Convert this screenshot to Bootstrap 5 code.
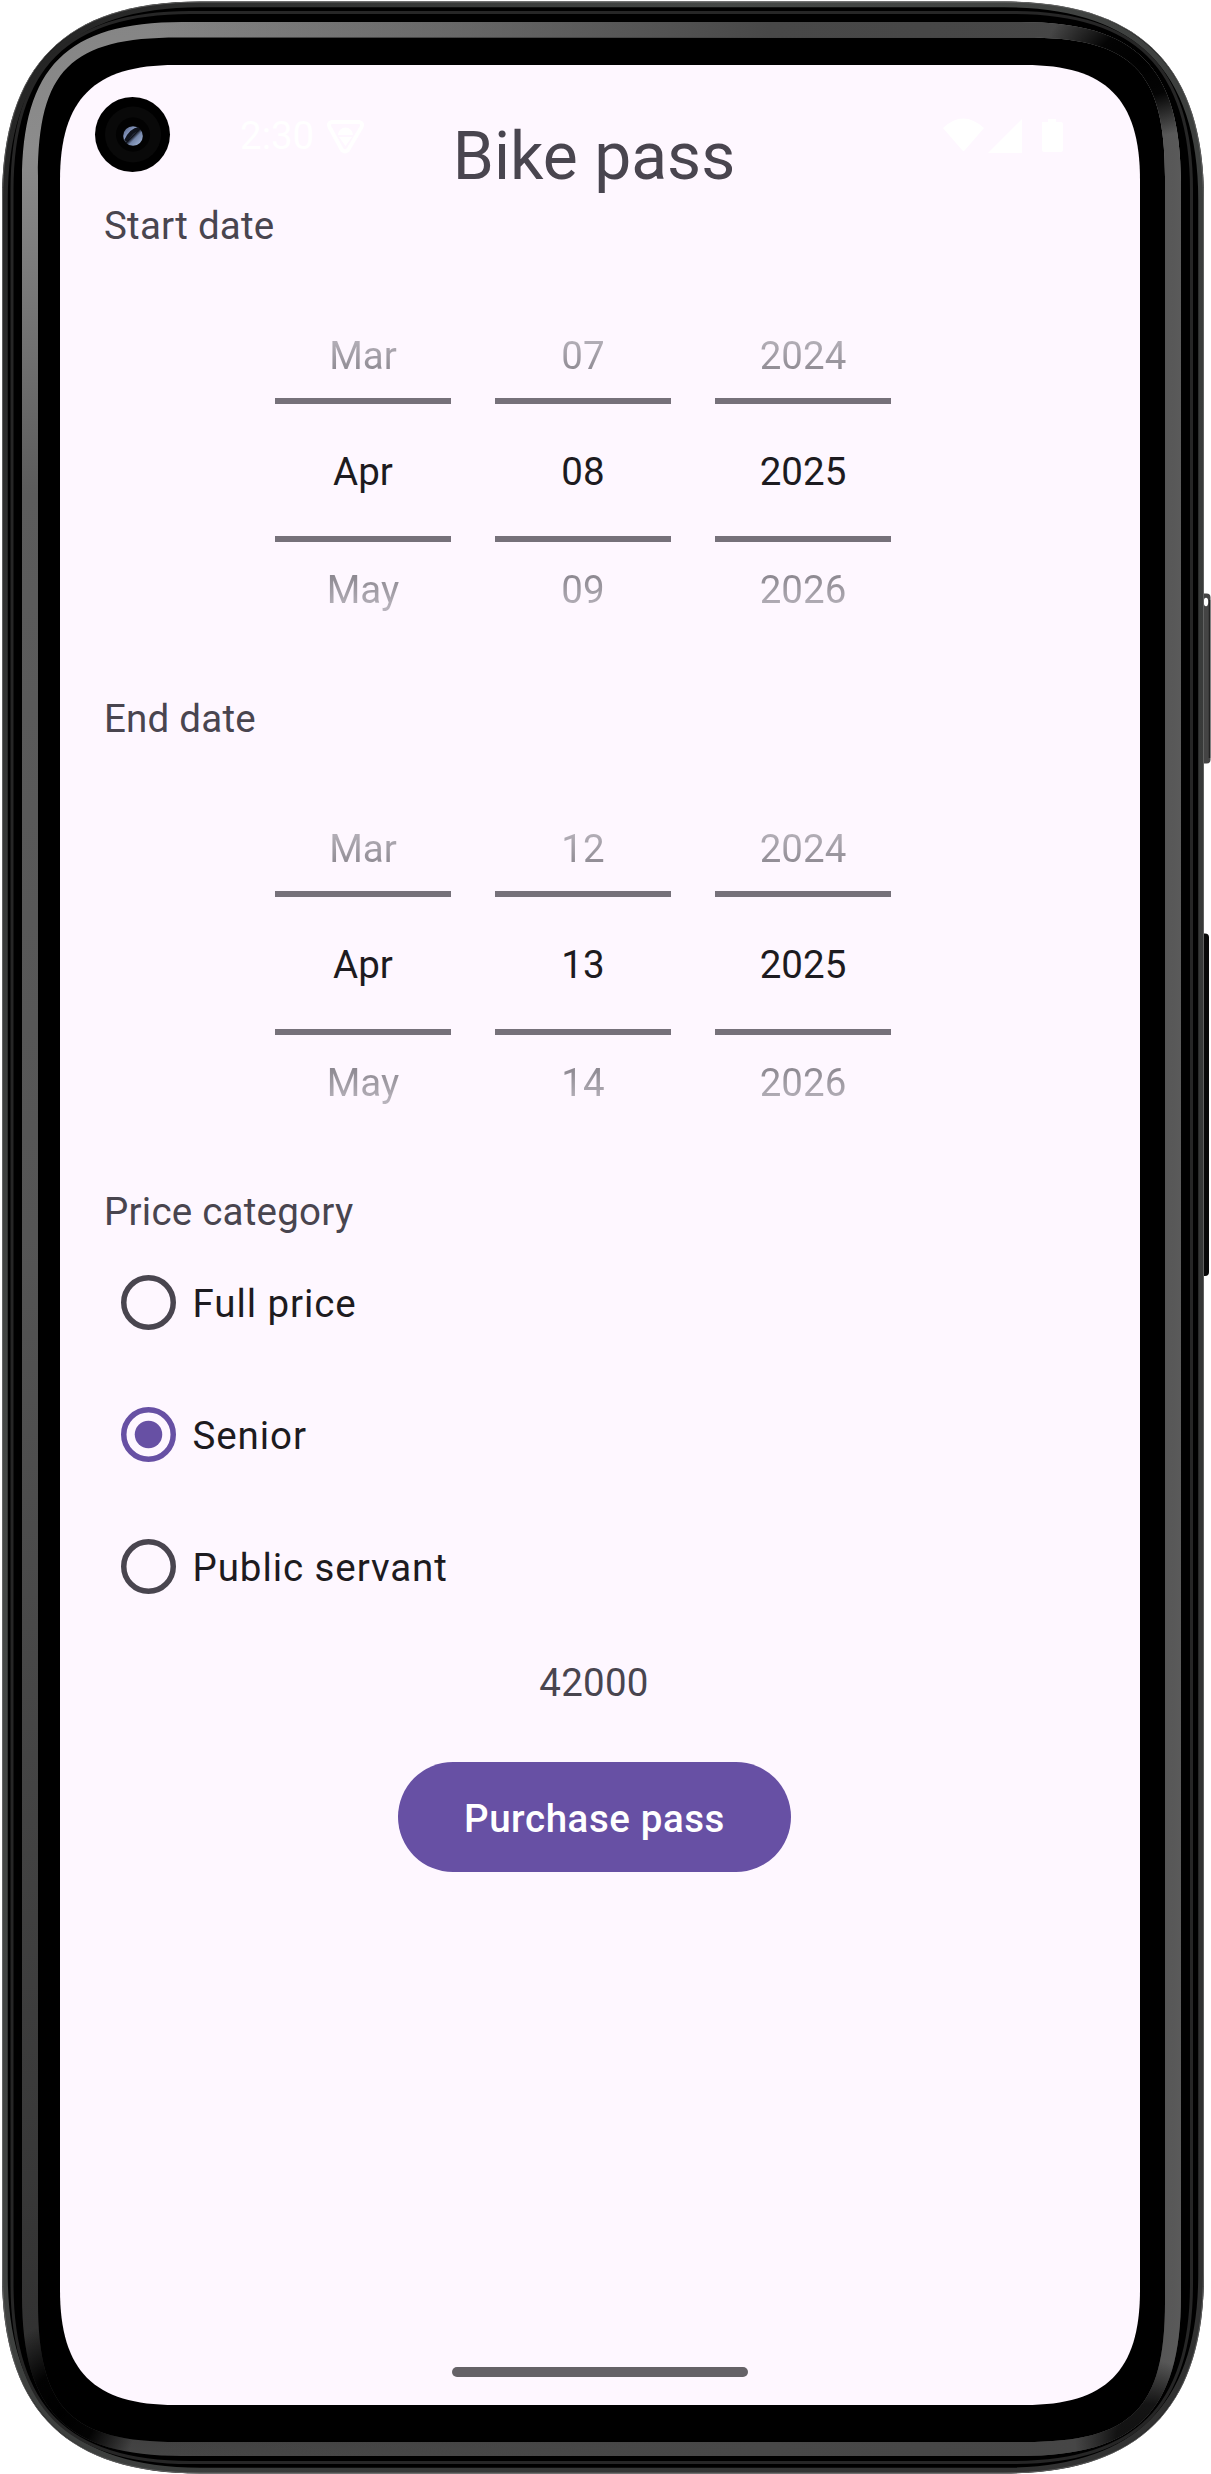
<!DOCTYPE html>
<html lang="en">
<head>
<meta charset="utf-8">
<meta name="viewport" content="width=device-width, initial-scale=1">
<title>Bike pass</title>
<link href="https://cdn.jsdelivr.net/npm/bootstrap@5.3.0/dist/css/bootstrap.min.css" rel="stylesheet">
<style>
  body { background:#fff; font-family:Roboto,"Liberation Sans",sans-serif; font-size:38.5px; line-height:52px; color:#1d1b20; }
  .device { width:1211px; height:2474px; padding:65px 71px 69px 60px; overflow:hidden; }
  .device-art { left:0; top:0; width:1211px; height:2474px; }
  .app-screen { width:1080px; height:2340px; padding:0 56px 0 44px; }
  .status-row { left:0; top:0; width:1080px; height:132px; color:#fff; }
  .status-time { left:180px; top:45px; }
  .status-vpn { left:266px; top:54px; }
  .status-icons { left:882px; top:50px; }
  .title-text { font-size:66px; line-height:78px; padding-top:53px; color:#49454f; font-weight:400; margin:0; }
  .muted-text { color:#49454f; letter-spacing:.006em; }
  .field-label { height:52px; margin-top:4px; }
  .picker-row { height:441px; gap:44px; padding-left:171px; margin-bottom:-4px; }
  .wheel { width:176px; text-align:center; padding-top:42.5px; }
  .wheel-item { height:117px; line-height:121px; }
  .wheel-sel { height:144px; margin:-13.5px 0; border:solid #76717a; border-width:6px 0; line-height:136px; }
  .fade-up, .fade-down { color:transparent; -webkit-background-clip:text; background-clip:text; }
  .fade-up { background-image:linear-gradient(#d5d0d9 15%,#77737b 82%); }
  .fade-down { background-image:linear-gradient(#77737b 25%,#d5d0d9 88%); }
  .choice { height:132px; letter-spacing:.024em; padding-left:16.5px; gap:17px; }
  .choice svg { margin-bottom:4px; }
  .price-text { margin-top:23px; }
  .btn-pass { --bs-btn-bg:#6750a4; --bs-btn-color:#fff; --bs-btn-border-width:0; --bs-btn-font-size:38.5px; --bs-btn-font-weight:500; --bs-btn-line-height:52px; width:393px; height:110px; padding:3px 0 0; margin:53px 0 0 1px; letter-spacing:.015em; }
  .home-bar { left:392px; bottom:28px; width:296px; height:10px; background:#656267; }
</style>
</head>
<body>
<div class="device position-relative">
  <svg class="device-art position-absolute" viewBox="0 0 1211 2474">
    <defs>
      <linearGradient id="edge" x1="0" y1="0" x2="1" y2="1"><stop offset="0" stop-color="#222"/><stop offset=".3" stop-color="#454846"/><stop offset=".6" stop-color="#3a3c3b"/><stop offset="1" stop-color="#303030"/></linearGradient>
      <linearGradient id="band" gradientUnits="userSpaceOnUse" x1="0" y1="0" x2="0" y2="2474"><stop offset="0" stop-color="#848484"/><stop offset=".06" stop-color="#8c8c8c"/><stop offset=".2" stop-color="#5c5c5c"/><stop offset=".5" stop-color="#555"/><stop offset=".88" stop-color="#383838"/><stop offset=".96" stop-color="#303030"/><stop offset="1" stop-color="#4a4a4a"/></linearGradient>
      <linearGradient id="bandR" gradientUnits="userSpaceOnUse" x1="150" y1="0" x2="1181" y2="0"><stop offset="0" stop-color="#4a4a4a" stop-opacity="0"/><stop offset=".6" stop-color="#484848"/><stop offset=".9" stop-color="#464646"/><stop offset="1" stop-color="#5a5a5a"/></linearGradient>
      <radialGradient id="shade"><stop offset="0" stop-color="#000"/><stop offset=".45" stop-color="#000" stop-opacity=".95"/><stop offset="1" stop-color="#000" stop-opacity="0"/></radialGradient>
      <linearGradient id="lens" x1="0" y1="0" x2="1" y2="1"><stop offset="0" stop-color="#4b5878"/><stop offset=".35" stop-color="#8a9cc4"/><stop offset=".5" stop-color="#10131c"/><stop offset=".62" stop-color="#7485a8"/><stop offset="1" stop-color="#a9bde0"/></linearGradient>
      <clipPath id="ring"><path clip-rule="evenodd" d="M22,182C22,67 67,22 182,22H1021C1136,22 1181,67 1181,182V2296C1181,2411 1136,2456 1021,2456H182C67,2456 22,2411 22,2296ZM38,177C38,70 71,37.500 178,37.500H1025C1132,37.500 1165,70 1165,177V2302C1165,2409 1132,2442 1025,2442H178C71,2442 38,2409 38,2302Z"/></clipPath>
    </defs>
    <rect x="1200" y="593.500" width="10.500" height="170" rx="4" fill="#444"/>
    <path d="M1209.500,600V758" stroke="#222" stroke-width="1.500"/>
    <ellipse cx="1206" cy="602" rx="2.200" ry="4.200" fill="#fff"/>
    <rect x="1200" y="933.500" width="9" height="342.500" rx="4" fill="#080808"/>
    <path fill="#000" d="M2,200C2,65 65,1.500 200,1.500H1004C1139,1.500 1204,65 1204,200V2274C1204,2409 1139,2473.500 1004,2473.500H200C65,2473.500 2,2409 2,2274Z"/>
    <path fill="none" stroke="url(#edge)" stroke-width="5.500" d="M5,200C5,68 68,4.500 200,4.500H1004C1136,4.500 1201,68 1201,200V2274C1201,2406 1136,2470.500 1004,2470.500H200C68,2470.500 5,2406 5,2274Z"/>
    <path fill="none" stroke="#777" stroke-opacity=".7" d="M2.500,200C2.500,65 65,2 200,2H1004C1139,2 1203.500,65 1203.500,200V2274C1203.500,2409 1139,2473 1004,2473H200C65,2473 2.500,2409 2.500,2274Z"/>
    <path fill="none" stroke="#262626" stroke-width="3" d="M12,190C12,67 67,12.500 190,12.500H1013C1136,12.500 1191.500,67 1191.500,190V2284C1191.500,2407 1136,2462.500 1013,2462.500H190C67,2462.500 12,2407 12,2284Z"/>
    <g clip-path="url(#ring)">
      <rect x="20" y="20" width="1165" height="2440" fill="url(#band)"/>
      <rect x="150" y="20" width="1035" height="2440" fill="url(#bandR)"/>
      <ellipse cx="1143" cy="62" rx="100" ry="75" fill="url(#shade)"/>
      <ellipse cx="62" cy="2412" rx="75" ry="90" fill="url(#shade)"/>
      <ellipse cx="1150" cy="2440" rx="75" ry="80" fill="url(#shade)" opacity=".8"/>
    </g>
    <path fill="#fef7ff" d="M60,180C60,99 94,65 175,65H1025C1106,65 1140,99 1140,180V2290C1140,2371 1106,2405 1025,2405H175C94,2405 60,2371 60,2290Z"/>
    <circle cx="132.500" cy="134.500" r="37.500" fill="#000"/>
    <circle cx="133" cy="134.500" r="28" fill="#090909"/>
    <circle cx="133" cy="134.500" r="17" fill="#020202"/>
    <circle cx="133" cy="136" r="9.800" fill="url(#lens)"/>
    <path d="M126,141Q131,130 139,129" fill="none" stroke="#10131c" stroke-width="4"/>
  </svg>

  <main class="app-screen position-relative d-flex flex-column">
    <div class="status-row position-absolute">
      <span class="status-time position-absolute">2:30</span>
      <svg class="status-vpn position-absolute" width="40" height="36" viewBox="0 0 40 36">
        <path d="M6,3H33Q38,4 35,9L22,31Q19,34 16,31L4,9Q1,4 6,3Z" fill="none" stroke="#fff" stroke-width="4" stroke-linejoin="round"/>
        <path d="M12,16A7,7 0 0 1 27,16ZM13,18H26L19.500,27Z" fill="#fff"/>
      </svg>
      <svg class="status-icons position-absolute" width="124" height="40" viewBox="0 0 124 40">
        <path fill="#fff" d="M1,13Q21,-6 42,13L23,35Q21.500,37 20,35ZM80,4V38H46ZM100,7H106V4H114V7H119Q121,7 121,9V35Q121,37 119,37H102Q100,37 100,35Z"/>
      </svg>
    </div>

    <h1 class="title-text text-center">Bike pass</h1>

    <section>
      <div class="muted-text field-label">Start date</div>
      <div class="picker-row d-flex">
        <div class="wheel"><div class="wheel-item fade-up">Mar</div><div class="wheel-sel">Apr</div><div class="wheel-item fade-down">May</div></div>
        <div class="wheel"><div class="wheel-item fade-up">07</div><div class="wheel-sel">08</div><div class="wheel-item fade-down">09</div></div>
        <div class="wheel"><div class="wheel-item fade-up">2024</div><div class="wheel-sel">2025</div><div class="wheel-item fade-down">2026</div></div>
      </div>
    </section>

    <section>
      <div class="muted-text field-label">End date</div>
      <div class="picker-row d-flex">
        <div class="wheel"><div class="wheel-item fade-up">Mar</div><div class="wheel-sel">Apr</div><div class="wheel-item fade-down">May</div></div>
        <div class="wheel"><div class="wheel-item fade-up">12</div><div class="wheel-sel">13</div><div class="wheel-item fade-down">14</div></div>
        <div class="wheel"><div class="wheel-item fade-up">2024</div><div class="wheel-sel">2025</div><div class="wheel-item fade-down">2026</div></div>
      </div>
    </section>

    <section>
      <div class="muted-text field-label">Price category</div>
      <div class="choice d-flex align-items-center">
        <svg width="55" height="55" viewBox="0 0 55 55"><circle cx="27.500" cy="27.500" r="24.750" fill="none" stroke="#49454f" stroke-width="5.500"/></svg>
        <span>Full price</span>
      </div>
      <div class="choice d-flex align-items-center">
        <svg width="55" height="55" viewBox="0 0 55 55"><circle cx="27.500" cy="27.500" r="24.750" fill="none" stroke="#6750a4" stroke-width="5.500"/><circle cx="27.500" cy="27.500" r="13.750" fill="#6750a4"/></svg>
        <span>Senior</span>
      </div>
      <div class="choice d-flex align-items-center">
        <svg width="55" height="55" viewBox="0 0 55 55"><circle cx="27.500" cy="27.500" r="24.750" fill="none" stroke="#49454f" stroke-width="5.500"/></svg>
        <span>Public servant</span>
      </div>
    </section>

    <div class="muted-text price-text text-center">42000</div>
    <button type="button" class="btn btn-pass rounded-pill align-self-center">Purchase pass</button>

    <div class="home-bar position-absolute rounded-pill"></div>
  </main>
</div>
<script src="https://cdn.jsdelivr.net/npm/bootstrap@5.3.0/dist/js/bootstrap.bundle.min.js"></script>
</body>
</html>
